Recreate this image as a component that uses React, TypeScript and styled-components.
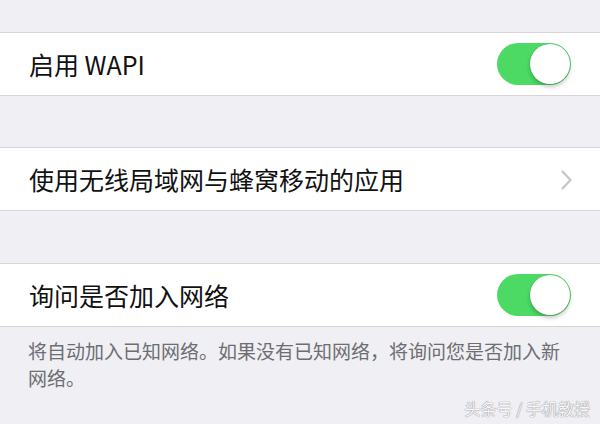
import React from "react";
import styled, { createGlobalStyle } from "styled-components";

const GlobalStyle = createGlobalStyle`
  html, body {
    margin: 0;
    padding: 0;
    background: #efeff4;
  }
  * { box-sizing: border-box; }
`;

const Screen = styled.div`
  position: relative;
  width: 600px;
  height: 424px;
  overflow: hidden;
  background: #efeff4;
  padding-top: 32px;
  font-family: "Noto Sans CJK SC", "Noto Sans", sans-serif;
`;

const Group = styled.div<{ $gap?: number }>`
  margin-top: ${(p) => p.$gap ?? 0}px;
  background: #ffffff;
  border-top: 1px solid #d6d6da;
  border-bottom: 1px solid #d6d6da;
`;

const Row = styled.div`
  height: 62px;
  display: flex;
  align-items: center;
  justify-content: space-between;
  padding: 0 29px 0 29px;
`;

const Label = styled.span`
  font-size: 25px;
  color: #111111;
  letter-spacing: 0;
  white-space: nowrap;
`;

const Switch = styled.div<{ $on: boolean }>`
  position: relative;
  width: 74px;
  height: 42px;
  border-radius: 21px;
  background: ${(p) => (p.$on ? "#4cd964" : "#e5e5ea")};
  flex-shrink: 0;
`;

const Knob = styled.div<{ $on: boolean }>`
  position: absolute;
  top: 1px;
  left: ${(p) => (p.$on ? "33px" : "1px")};
  width: 40px;
  height: 40px;
  border-radius: 50%;
  background: #ffffff;
  box-shadow: 0 3px 4px rgba(0, 0, 0, 0.22), 0 0 1px rgba(0, 0, 0, 0.2);
`;

const Chevron = styled.svg`
  width: 11px;
  height: 20px;
  flex-shrink: 0;
  margin-right: -1px;
  margin-top: 2px;
`;

const Footer = styled.p`
  margin: 0;
  padding: 10px 29px 0 28px;
  font-size: 19px;
  line-height: 27px;
  color: #6d6d72;
`;

const Watermark = styled.span`
  position: absolute;
  right: 10px;
  bottom: 4px;
  font-size: 16px;
  color: #f6f6f8;
  text-shadow: 0 0 1px #8e8e93, 0 0 1px #8e8e93;
  letter-spacing: 0;
`;

const ToggleRow: React.FC<{ label: string; on: boolean }> = ({ label, on }) => (
  <Row>
    <Label>{label}</Label>
    <Switch $on={on}>
      <Knob $on={on} />
    </Switch>
  </Row>
);

export default function App() {
  return (
    <>
      <GlobalStyle />
      <Screen>
        <Group>
          <ToggleRow label="启用 WAPI" on />
        </Group>
        <Group $gap={51}>
          <Row>
            <Label>使用无线局域网与蜂窝移动的应用</Label>
            <Chevron viewBox="0 0 11 20">
              <path
                d="M1.5 1.5 L9.5 10 L1.5 18.5"
                fill="none"
                stroke="#c7c7cc"
                strokeWidth="2.4"
                strokeLinecap="round"
                strokeLinejoin="round"
              />
            </Chevron>
          </Row>
        </Group>
        <Group $gap={52}>
          <ToggleRow label="询问是否加入网络" on />
        </Group>
        <Footer>将自动加入已知网络。如果没有已知网络，将询问您是否加入新网络。</Footer>
        <Watermark>头条号 / 手机教授</Watermark>
      </Screen>
    </>
  );
}
